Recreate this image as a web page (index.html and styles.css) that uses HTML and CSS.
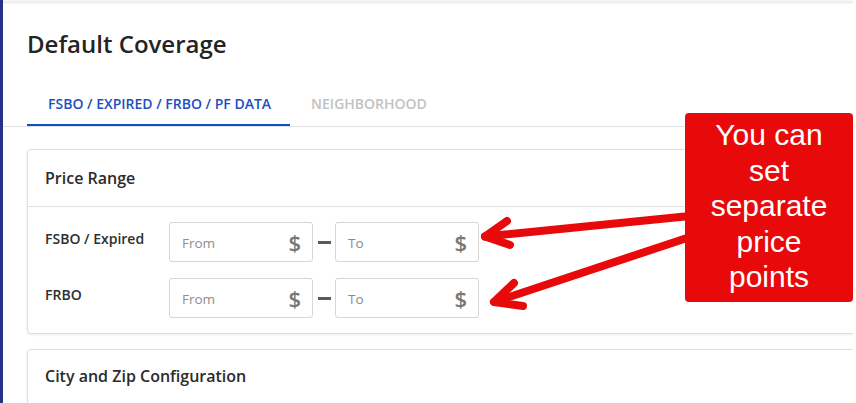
FILE: index.html
```html
<!DOCTYPE html>
<html lang="en">
<head>
<meta charset="utf-8">
<title>Default Coverage</title>
<link rel="stylesheet" href="styles.css">
</head>
<body>
<div class="page">
  <div class="sidebar"></div>
  <main class="main">
    <div class="topbar"></div>
    <h1 class="title">Default Coverage</h1>
    <nav class="tabs">
      <div class="tab active">FSBO / EXPIRED / FRBO / PF DATA</div>
      <div class="tab">NEIGHBORHOOD</div>
    </nav>
    <section class="card">
      <div class="card-header">Price Range</div>
      <div class="card-body">
        <div class="row">
          <div class="label">FSBO / Expired</div>
          <div class="field"><span class="ph">From</span><span class="dollar">$</span></div>
          <div class="dash"><span></span></div>
          <div class="field"><span class="ph">To</span><span class="dollar">$</span></div>
        </div>
        <div class="row">
          <div class="label">FRBO</div>
          <div class="field"><span class="ph">From</span><span class="dollar">$</span></div>
          <div class="dash"><span></span></div>
          <div class="field"><span class="ph">To</span><span class="dollar">$</span></div>
        </div>
      </div>
    </section>
    <section class="card">
      <div class="card-header second">City and Zip Configuration</div>
      <div class="card-body tall"></div>
    </section>
  </main>
  <div class="edge"></div>
</div>
<svg class="arrows" width="856" height="403" viewBox="0 0 856 403" aria-hidden="true">
  <g fill="none" stroke="#e80a0a" stroke-width="8" stroke-linecap="round" stroke-linejoin="round">
    <path d="M690 216 L485 236.5"/>
    <path d="M507 221 L485 236.5 L510 245"/>
    <path d="M690 237 L494 302"/>
    <path d="M514 283 L494 302 L523 306"/>
  </g>
</svg>
<div class="callout">You can set separate price points</div>
</body>
</html>
```

FILE: styles.css
```css
* { box-sizing: border-box; }
html, body { margin: 0; padding: 0; background: #fff; }
body {
  font-family: "Open Sans", "Noto Sans", sans-serif;
  color: #2b2b2b;
  width: 856px;
  height: 403px;
  overflow: hidden;
  position: relative;
}
.page { display: flex; height: 403px; }
.sidebar { width: 3px; background: #263287; flex: none; }
.edge { width: 3px; flex: none; background: #fff; }
.main { width: 850px; flex: none; overflow: hidden; }
.topbar {
  height: 4px;
  background: linear-gradient(#fafafa, #ececec 45%, #f6f6f6);
}
.title {
  margin: 24px 0 0 24px;
  font-size: 24px;
  line-height: 32px;
  font-weight: 600;
  color: #242424;
}
.tabs {
  display: flex;
  margin-top: 28px;
  padding-left: 24px;
  border-bottom: 1px solid #e2e2e2;
}
.tab {
  padding: 7px 19px 11px 21px;
  font-size: 14px;
  line-height: 18px;
  font-weight: 600;
  color: #c2c2c2;
  border-bottom: 2px solid transparent;
}
.tab.active { color: #1d4fbf; border-bottom-color: #0b50c5; }
.card {
  margin: 22px -30px 0 24px;
  border: 1px solid #dedede;
  border-radius: 4px;
  box-shadow: 0 1px 3px rgba(0, 0, 0, 0.07);
  background: #fff;
}
.card + .card { margin-top: 15px; }
.card-header {
  padding: 18px 17px;
  font-size: 16px;
  line-height: 20px;
  font-weight: 600;
  color: #2b2b2b;
  border-bottom: 1px solid #e3e3e3;
}
.card-header.second { padding-top: 16px; }
.card-body {
  padding: 15px 17px 15px 17px;
  display: flex;
  flex-direction: column;
  gap: 16px;
}
.card-body.tall { height: 60px; }
.row { display: flex; align-items: flex-start; }
.label {
  width: 124px;
  padding-top: 8px;
  font-size: 14px;
  line-height: 18px;
  font-weight: 600;
  color: #2e2e2e;
}
.field {
  width: 144px;
  height: 40px;
  border: 1px solid #d6d6d6;
  border-radius: 3px;
  display: flex;
  align-items: center;
  justify-content: space-between;
  padding: 0 11px 1px 12px;
}
.ph {
  font-size: 13.5px;
  color: #8c8c8c;
  padding-top: 2px;
}
.dollar {
  font-size: 22px;
  font-weight: 600;
  color: #777;
  line-height: 22px;
}
.dash {
  width: 22px;
  height: 40px;
  display: flex;
  align-items: center;
  padding-left: 5px;
}
.dash span { width: 13px; height: 3px; background: #5a5a5a; }
.arrows { position: absolute; left: 0; top: 0; }
.callout {
  position: absolute;
  left: 685px;
  top: 113px;
  width: 168px;
  height: 189px;
  background: #e80a0a;
  border-radius: 4px;
  color: #fff;
  font-family: "Liberation Sans", Arial, sans-serif;
  font-size: 30px;
  line-height: 35.5px;
  text-align: center;
  padding: 4px 20px 0;
}
```
